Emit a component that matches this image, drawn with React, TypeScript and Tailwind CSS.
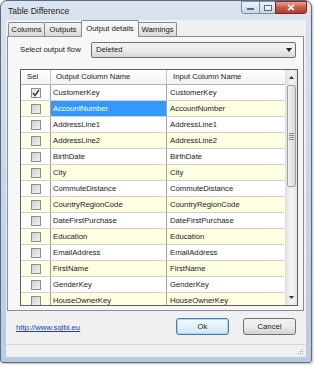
import { ChevronDown } from 'lucide-react';

const rows = [
  'CustomerKey',
  'AccountNumber',
  'AddressLine1',
  'AddressLine2',
  'BirthDate',
  'City',
  'CommuteDistance',
  'CountryRegionCode',
  'DateFirstPurchase',
  'Education',
  'EmailAddress',
  'FirstName',
  'GenderKey',
  'HouseOwnerKey',
];

function CheckBox({ checked }: { checked?: boolean }) {
  return (
    <span
      className={`flex items-center justify-center w-[10px] h-[10px] border border-[#8f8f8f] ${
        checked ? 'bg-gradient-to-br from-[#e4e4e4] to-[#fbfbfb]' : 'bg-gradient-to-br from-[#cfcfcf] to-[#f4f4f4]'
      }`}
    >
      {checked && (
        <svg width="8" height="8" viewBox="0 0 8 8">
          <path d="M1 4 L3 6.5 L7 1" fill="none" stroke="#2c3e5c" strokeWidth="1.4" />
        </svg>
      )}
    </span>
  );
}

// Tab header in the tab strip
function Tab({ label, width, selected, first }: { label: string; width: string; selected?: boolean; first?: boolean }) {
  if (selected) {
    return (
      <div
        className={`relative z-10 -ml-px mb-[-1px] h-[17px] ${width} flex items-center justify-center border border-b-0 border-[#898c95] bg-[#f7f7f7] rounded-t-[2px]`}
      >
        {label}
      </div>
    );
  }
  return (
    <div
      className={`${first ? '' : '-ml-px'} h-[14px] ${width} flex items-center justify-center border border-b-0 border-[#898c95] bg-gradient-to-b from-[#f3f3f3] to-[#dadada] rounded-t-[2px]`}
    >
      {label}
    </div>
  );
}

export default function App() {
  return (
    <div
      className="w-[316px] h-[366px] bg-white overflow-hidden text-[7.7px] text-[#1a1a1a]"
      style={{ fontFamily: '"Liberation Sans", Arial, sans-serif' }}
    >
      <div className="w-[312px] h-[363px] flex flex-col rounded-t-[7px] rounded-b-[3px] border border-[#5b6b7f] bg-gradient-to-b from-[#dae3ee] via-[#c8d6e6] to-[#b9cbe0] px-[5px] pb-[5px] shadow-[1px_1px_2px_rgba(0,0,0,0.25)]">
        {/* title bar */}
        <div className="h-[19px] flex items-start justify-between">
          <span className="pl-[2px] pt-[4px] text-[8.5px] text-[#1b1b1b]">Table Difference</span>
          <div className="flex -mr-[1px] h-[13px]">
            <div className="w-[19px] h-[13px] flex items-end justify-center pb-[3px] border border-[#7d8ea3] rounded-bl-[3px] bg-gradient-to-b from-[#eef3f8] to-[#c7d5e4]">
              <span className="w-[7px] h-[2px] bg-white border border-[#5b6b7f]" />
            </div>
            <div className="w-[17px] h-[13px] -ml-px flex items-center justify-center border border-[#7d8ea3] bg-gradient-to-b from-[#eef3f8] to-[#c7d5e4]">
              <span className="w-[8px] h-[6px] border border-[#5b6b7f] bg-white/40" />
            </div>
            <div className="w-[32px] h-[13px] -ml-px flex items-center justify-center border border-[#7a2a24] rounded-br-[3px] bg-gradient-to-b from-[#e8a193] via-[#c85a47] to-[#b83a25]">
              <svg width="8" height="7" viewBox="0 0 8 7">
                <path d="M1 0.8 L7 6.2 M7 0.8 L1 6.2" stroke="white" strokeWidth="1.8" />
              </svg>
            </div>
          </div>
        </div>

        {/* client area */}
        <div className="flex-1 flex flex-col bg-[#f0f0f0]">
          {/* tab strip */}
          <div className="h-[16px] flex items-end pl-[2px]">
            <Tab label="Columns" width="w-[37px]" first />
            <Tab label="Outputs" width="w-[38px]" />
            <Tab label="Output details" width="w-[58px]" selected />
            <Tab label="Warnings" width="w-[39px]" />
          </div>

          {/* tab page */}
          <div className="ml-[1px] w-[297px] h-[275px] border border-[#898c95] bg-[#f7f7f7] flex flex-col">
            <div className="flex items-center pt-[5px] pl-[12px]">
              <span className="w-[71px]">Select output flow</span>
              <div className="w-[205px] h-[16px] flex items-center justify-between pl-[4px] pr-[3px] border border-[#707070] rounded-[2px] bg-gradient-to-b from-[#f2f2f2] via-[#ebebeb] to-[#d6d6d6]">
                <span>Deleted</span>
                <svg width="6" height="4" viewBox="0 0 6 4">
                  <path d="M0 0 H6 L3 4 Z" fill="#222" />
                </svg>
              </div>
            </div>

            {/* grid */}
            <div className="mt-[11px] ml-[12px] w-[278px] h-[237px] border border-[#5f5f5f] bg-white flex overflow-hidden">
              <div className="flex-1 flex flex-col overflow-hidden">
                <div className="h-[15px] shrink-0 flex border-b border-[#b5b5b5] bg-gradient-to-b from-white to-[#f2f2f2]">
                  <div className="w-[30px] shrink-0 border-r border-[#c5c5c5] pl-[6px] flex items-center">Sel</div>
                  <div className="w-[116px] shrink-0 border-r border-[#c5c5c5] pl-[5px] flex items-center">Output Column Name</div>
                  <div className="flex-1 pl-[6px] flex items-center">Input Column Name</div>
                </div>
                {rows.map((name, i) => {
                  const yellow = i % 2 === 1;
                  const rowBg = yellow ? 'bg-[#ffffe1]' : 'bg-white';
                  return (
                    <div key={name} className={`h-[16px] shrink-0 flex border-b border-[#d0d0d0] ${rowBg}`}>
                      <div className="w-[30px] shrink-0 border-r border-[#a0a0a0] flex items-center justify-center">
                        <CheckBox checked={i === 0} />
                      </div>
                      <div
                        className={`w-[116px] shrink-0 border-r border-[#a0a0a0] pl-[2px] flex items-center ${
                          i === 1 ? 'bg-[#3399ff] text-white' : ''
                        }`}
                      >
                        {name}
                      </div>
                      <div className="flex-1 pl-[3px] flex items-center">{name}</div>
                    </div>
                  );
                })}
              </div>

              {/* vertical scrollbar */}
              <div className="w-[12px] shrink-0 flex flex-col bg-gradient-to-r from-[#e3e3e3] via-[#f4f4f4] to-[#e3e3e3] border-l border-[#e0e0e0]">
                <div className="h-[15px] flex items-center justify-center">
                  <svg width="5" height="3" viewBox="0 0 5 3">
                    <path d="M0 3 H5 L2.5 0 Z" fill="#333" />
                  </svg>
                </div>
                <div className="mx-[1px] h-[102px] rounded-[2px] border border-[#a2a2a2] bg-gradient-to-r from-[#f3f3f3] to-[#d9d9d9] flex flex-col items-center justify-center gap-[1px]">
                  <span className="w-[5px] h-px bg-[#8a8a8a]" />
                  <span className="w-[5px] h-px bg-[#8a8a8a]" />
                  <span className="w-[5px] h-px bg-[#8a8a8a]" />
                  <span className="w-[5px] h-px bg-[#8a8a8a]" />
                </div>
                <div className="flex-1" />
                <div className="h-[15px] flex items-center justify-center">
                  <svg width="5" height="3" viewBox="0 0 5 3">
                    <path d="M0 0 H5 L2.5 3 Z" fill="#333" />
                  </svg>
                </div>
              </div>
            </div>
          </div>

          {/* buttons row */}
          <div className="flex items-end pt-[7px] pl-[10px] pr-[10px]">
            <a className="text-[#1a3cc8] underline pb-[1px]">http://www.sqlbi.eu</a>
            <div className="flex-1" />
            <button className="w-[53px] h-[17px] rounded-[3px] border border-[#3c7fb1] bg-gradient-to-b from-[#f4fafe] via-[#e3f1fb] to-[#cfe6f6] shadow-[inset_0_0_0_1px_#a9d9f0]">
              Ok
            </button>
            <button className="ml-[14px] w-[53px] h-[17px] rounded-[3px] border border-[#707070] bg-gradient-to-b from-[#f2f2f2] via-[#ebebeb] to-[#d3d3d3]">
              Cancel
            </button>
          </div>

          <div className="flex-1" />
          {/* status strip */}
          <div className="h-[13px] border-t border-[#d7d7d7] flex justify-end items-end pr-[2px] pb-[2px]">
            <svg width="6" height="6" viewBox="0 0 6 6">
              <rect x="4" y="0" width="1" height="1" fill="#9a9a9a" />
              <rect x="2" y="2" width="1" height="1" fill="#9a9a9a" />
              <rect x="4" y="2" width="1" height="1" fill="#9a9a9a" />
              <rect x="0" y="4" width="1" height="1" fill="#9a9a9a" />
              <rect x="2" y="4" width="1" height="1" fill="#9a9a9a" />
              <rect x="4" y="4" width="1" height="1" fill="#9a9a9a" />
            </svg>
          </div>
        </div>
      </div>
    </div>
  );
}
